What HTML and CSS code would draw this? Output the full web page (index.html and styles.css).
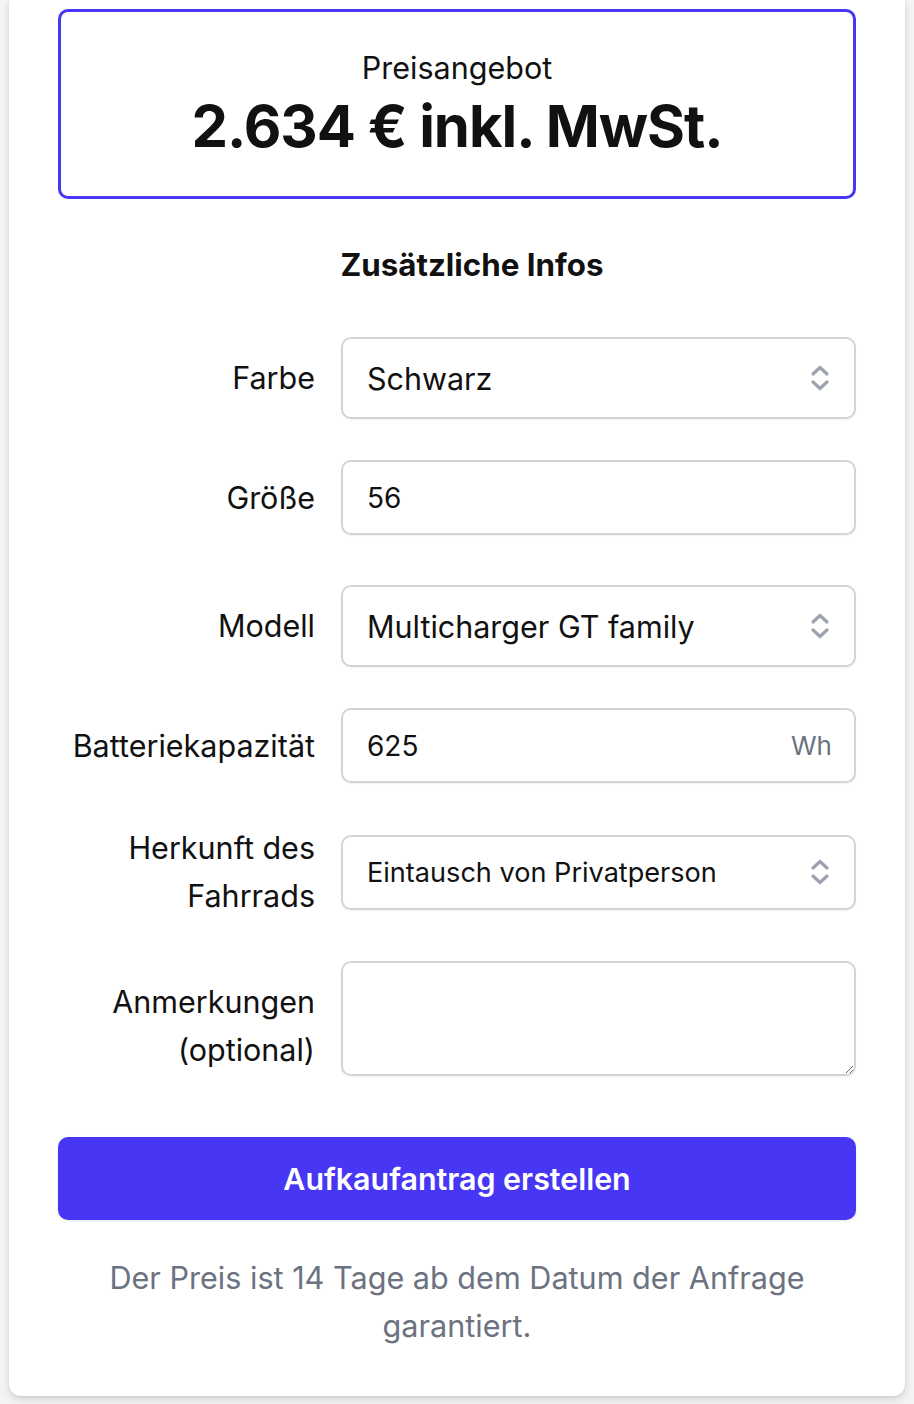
FILE: index.html
```html
<html>
<head>
<title>Preisangebot</title>
<link rel="stylesheet" href="styles.css">
</head>
<body>

<div class="card">
<div class="quote">
<div class="quote-label">Preisangebot</div>
<div class="quote-price">2.634 € inkl. MwSt.</div>
</div>

<h2 class="section-title">Zusätzliche Infos</h2>

<form class="fields">
<div class="field">
<label class="field-label" for="farbe">Farbe</label>
<div class="control">
<select id="farbe" class="select"><option>Schwarz</option></select>
<svg class="chevrons" width="20" height="26" viewBox="0 0 20 26"><path d="M3 9 L10 2.5 L17 9 M3 17 L10 23.5 L17 17" fill="none" stroke="#9ca3af" stroke-width="3.2" stroke-linecap="round" stroke-linejoin="round"/></svg>
</div>
</div>

<div class="field compact">
<label class="field-label" for="groesse">Größe</label>
<div class="control">
<input id="groesse" class="input" type="text" value="56">
</div>
</div>

<div class="field">
<label class="field-label" for="modell">Modell</label>
<div class="control">
<select id="modell" class="select"><option>Multicharger GT family</option></select>
<svg class="chevrons" width="20" height="26" viewBox="0 0 20 26"><path d="M3 9 L10 2.5 L17 9 M3 17 L10 23.5 L17 17" fill="none" stroke="#9ca3af" stroke-width="3.2" stroke-linecap="round" stroke-linejoin="round"/></svg>
</div>
</div>

<div class="field">
<label class="field-label" for="batterie">Batteriekapazität</label>
<div class="control">
<input id="batterie" class="input" type="text" value="625">
<span class="unit">Wh</span>
</div>
</div>

<div class="field">
<label class="field-label" for="herkunft">Herkunft des Fahrrads</label>
<div class="control">
<select id="herkunft" class="select small"><option>Eintausch von Privatperson</option></select>
<svg class="chevrons" width="20" height="26" viewBox="0 0 20 26"><path d="M3 9 L10 2.5 L17 9 M3 17 L10 23.5 L17 17" fill="none" stroke="#9ca3af" stroke-width="3.2" stroke-linecap="round" stroke-linejoin="round"/></svg>
</div>
</div>

<div class="field">
<label class="field-label" for="notes">Anmerkungen (optional)</label>
<div class="control">
<textarea id="notes" class="textarea"></textarea>
</div>
</div>
</form>

<button class="submit" type="button">Aufkaufantrag erstellen</button>

<p class="note">Der Preis ist 14 Tage ab dem Datum der Anfrage garantiert.</p>
</div>

</body>
</html>
```

FILE: styles.css
```css
body {
	margin: 0;
	padding: 0 9px;
	background: #f3f4f6;
	font-family: "Inter", "Liberation Sans", sans-serif;
	color: #111;
}
.card {
	background: #fff;
	padding: 9px 49px 46px;
	border-radius: 0 0 12px 12px;
	box-shadow: 0 4px 10px rgba(0, 0, 0, 0.12), 0 1px 3px rgba(0, 0, 0, 0.08);
}
.quote {
	border: 3px solid #4737f5;
	border-radius: 10px;
	padding: 34px 0;
	text-align: center;
}
.quote-label {
	font-size: 30.5px;
	line-height: 44px;
}
.quote-price {
	font-size: 58px;
	line-height: 72px;
	font-weight: 700;
	letter-spacing: -1px;
}
.section-title {
	margin: 46px 0 52px;
	padding-left: 30px;
	text-align: center;
	font-size: 31.3px;
	line-height: 40px;
	font-weight: 700;
}
.fields {
	display: flex;
	flex-direction: column;
	gap: 41px;
	margin: 0;
}
.field {
	display: grid;
	grid-template-columns: 257px 515px;
	column-gap: 26px;
	align-items: center;
}
.field.compact {
	margin-bottom: 9px;
}
.field-label {
	text-align: right;
	font-size: 30.5px;
	line-height: 48px;
}
.control {
	position: relative;
}
.select, .input, .textarea {
	display: block;
	box-sizing: border-box;
	width: 100%;
	margin: 0;
	border: 2px solid #d1d5db;
	border-radius: 10px;
	background: #fff;
	box-shadow: 0 1px 2px rgba(0, 0, 0, 0.06);
	font-family: inherit;
	color: #111;
}
.select {
	appearance: none;
	-webkit-appearance: none;
	height: 82px;
	padding: 0 60px 0 24px;
	font-size: 30.5px;
}
.select.small {
	height: 75px;
	font-size: 27.1px;
}
.input {
	height: 75px;
	padding: 0 24px;
	font-size: 28px;
}
.textarea {
	height: 115px;
	margin-bottom: 14px;
	resize: vertical;
}
.chevrons {
	position: absolute;
	right: 26px;
	top: 50%;
	margin-top: -13px;
}
.unit {
	position: absolute;
	right: 24px;
	top: 0;
	line-height: 75px;
	font-size: 26px;
	color: #6b7280;
}
.submit {
	display: block;
	width: 100%;
	height: 83px;
	margin-top: 47px;
	border: 0;
	border-radius: 10px;
	background: #4737f5;
	color: #fff;
	font-family: inherit;
	font-size: 30.4px;
	font-weight: 600;
	box-shadow: 0 1px 3px rgba(0, 0, 0, 0.1);
}
.note {
	margin: 34px 0 0;
	text-align: center;
	font-size: 30.6px;
	line-height: 48px;
	color: #6b7280;
}
```
